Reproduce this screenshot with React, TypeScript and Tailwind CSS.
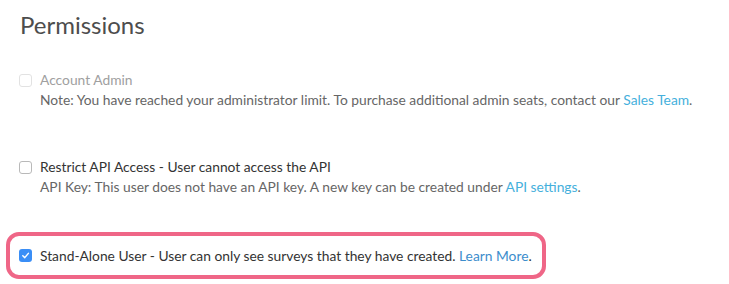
function Box({ checked = false, disabled = false }: { checked?: boolean; disabled?: boolean }) {
  if (checked) {
    return (
      <span className="w-[13px] h-[13px] rounded-[3px] bg-[#3a8ef6] flex items-center justify-center shrink-0">
        <svg width="9" height="9" viewBox="0 0 10 10" fill="none">
          <path d="M2 5.2 L4.2 7.4 L8.2 2.6" stroke="white" strokeWidth="1.6" strokeLinecap="round" strokeLinejoin="round" />
        </svg>
      </span>
    );
  }
  return (
    <span
      className={
        disabled
          ? 'w-[13px] h-[13px] rounded-[3px] border border-[#e2e2e2] bg-white shrink-0'
          : 'w-[13px] h-[13px] rounded-[3px] border border-[#b9b9b9] bg-white shrink-0'
      }
    />
  );
}

export default function App() {
  return (
    <div className="w-[729px] h-[284px] bg-white overflow-hidden font-['Lato','Noto_Sans',sans-serif] text-[13.8px]">
      <h1 className="pl-[20px] pt-[10px] text-[24px] leading-[30px] text-[#4d4d4d]">Permissions</h1>

      <div className="pl-[19px] pt-[30px]">
        <label className="flex items-center gap-[8px] text-[#a0a0a0] leading-[20px]">
          <Box disabled />
          <span>Account Admin</span>
        </label>
        <p className="pl-[21px] text-[#666] leading-[20px]">
          Note: You have reached your administrator limit. To purchase additional admin seats, contact our{' '}
          <a className="text-[#45b0dc]">Sales Team</a>.
        </p>
      </div>

      <div className="pl-[19px] pt-[47px]">
        <label className="flex items-center gap-[8px] text-[#333] leading-[20px]">
          <Box />
          <span>Restrict API Access - User cannot access the API</span>
        </label>
        <p className="pl-[21px] text-[#666] leading-[20px]">
          API Key: This user does not have an API key. A new key can be created under{' '}
          <a className="text-[#45b0dc]">API settings</a>.
        </p>
      </div>

      <div className="ml-[6px] mt-[35px] w-[540px] h-[47px] border-[4px] border-[#ef6687] rounded-[13px] flex items-center pl-[9px]">
        <label className="flex items-center gap-[8px] text-[#333] leading-[20px]">
          <Box checked />
          <span>
            Stand-Alone User - User can only see surveys that they have created.{' '}
            <a className="text-[#3c8dcc]">Learn More</a>.
          </span>
        </label>
      </div>
    </div>
  );
}
